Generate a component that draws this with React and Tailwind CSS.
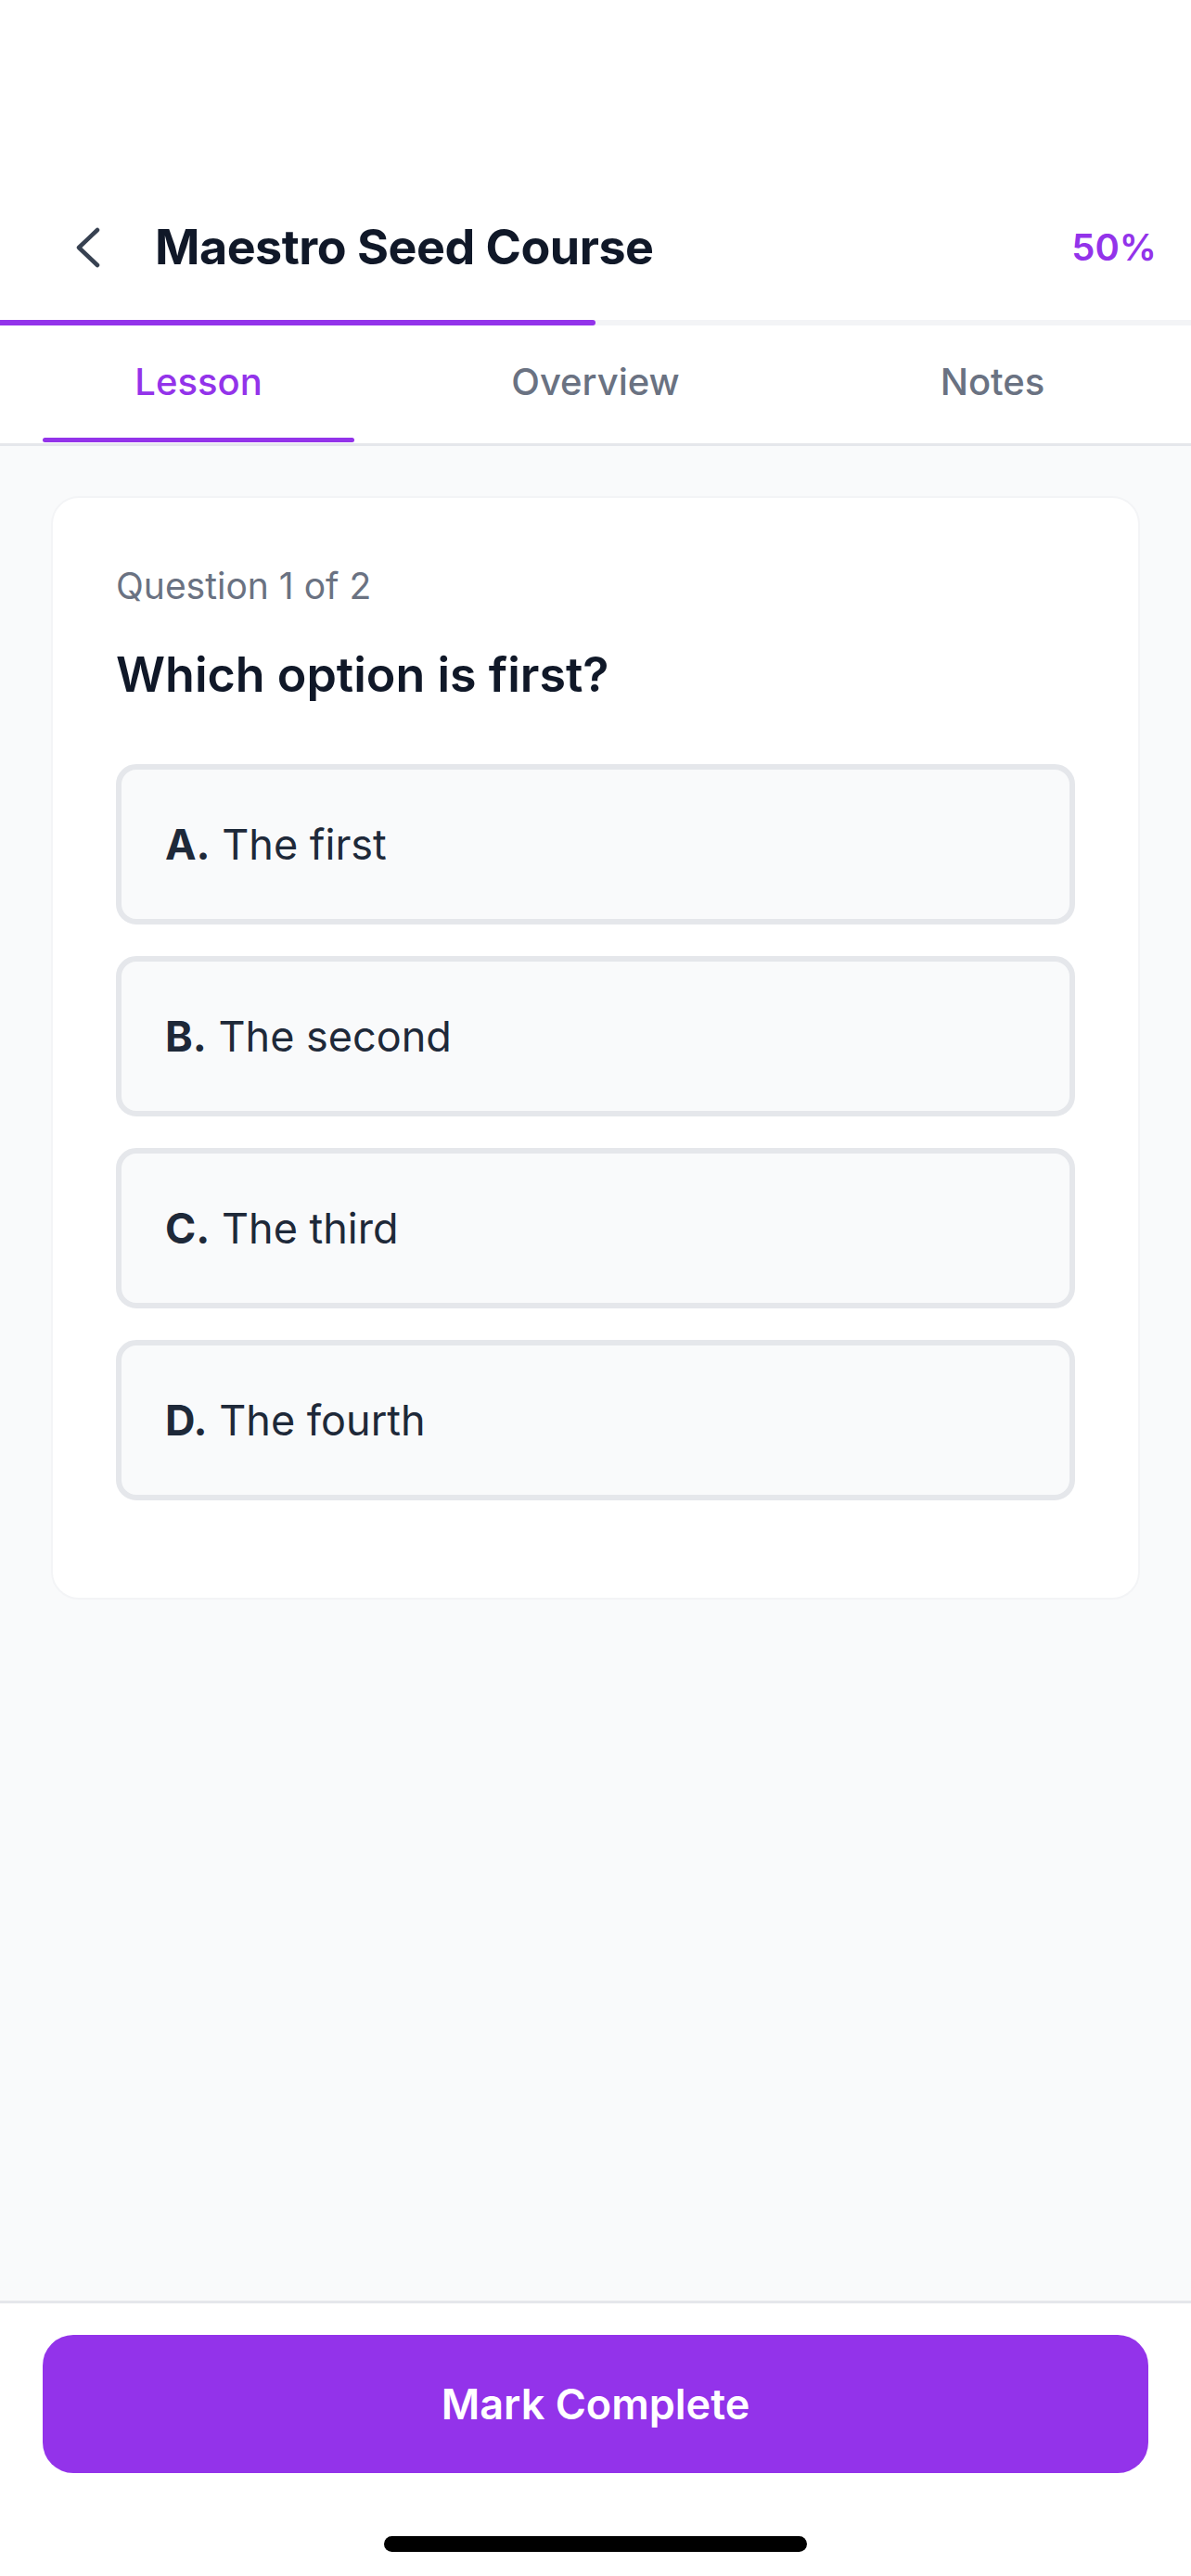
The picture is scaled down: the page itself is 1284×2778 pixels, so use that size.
import React, { useState } from "react";

const options = [
  { key: "A", text: "The first" },
  { key: "B", text: "The second" },
  { key: "C", text: "The third" },
  { key: "D", text: "The fourth" },
];

const tabs = ["Lesson", "Overview", "Notes"];

const App = () => {
  const [activeTab, setActiveTab] = useState("Lesson");
  const [selected, setSelected] = useState(null);
  const progress = 50;

  return (
    <div className="min-h-screen flex flex-col bg-white font-['Inter','Liberation_Sans',sans-serif]">
      {/* Header */}
      <div className="pt-[207px] pb-[18px]">
        <div className="h-[120px] flex items-center pl-[80px] pr-[37px]">
          <button type="button" className="w-[28px] h-[48px] flex items-center justify-center">
            <svg width="28" height="48" viewBox="0 0 28 48" fill="none">
              <polyline
                points="25,5 5,24 25,43"
                stroke="#374151"
                strokeWidth="4.5"
                strokeLinecap="round"
                strokeLinejoin="round"
              />
            </svg>
          </button>
          <h1 className="ml-[59px] flex-1 text-[52px] font-bold text-gray-900 tracking-[-0.5px]">
            Maestro Seed Course
          </h1>
          <span className="text-[40px] font-semibold text-[#9333ea]">{progress}%</span>
        </div>
      </div>

      {/* Progress */}
      <div className="h-[6px] bg-gray-100">
        <div className="h-full bg-[#9333ea] rounded-r-full" style={{ width: `${progress}%` }} />
      </div>

      {/* Tabs */}
      <div className="flex border-b-[3px] border-gray-200">
        {tabs.map((tab) => (
          <button
            key={tab}
            type="button"
            onClick={() => setActiveTab(tab)}
            className="flex-1 h-[127px] flex flex-col"
          >
            <span
              className={`flex-1 flex items-center justify-center text-[40px] font-medium ${
                activeTab === tab ? "text-[#9333ea]" : "text-gray-500"
              }`}
            >
              {tab}
            </span>
            <span
              className={`h-[5px] mx-[46px] mb-[1px] rounded-full ${
                activeTab === tab ? "bg-[#9333ea]" : "bg-transparent"
              }`}
            />
          </button>
        ))}
      </div>

      {/* Content */}
      <div className="flex-1 bg-gray-50 pt-[54px] px-[55px]">
        <div className="bg-white border-2 border-gray-100 rounded-[30px] pt-[71px] pb-[105px] px-[68px]">
          <p className="text-[39px] text-gray-500 leading-[48px]">Question 1 of 2</p>
          <h2 className="mt-[41px] text-[52px] font-semibold text-gray-900 leading-[62px]">
            Which option is first?
          </h2>
          <div className="mt-[65px] flex flex-col gap-[34px]">
            {options.map((opt) => (
              <button
                key={opt.key}
                type="button"
                onClick={() => setSelected(opt.key)}
                className={`h-[173px] flex items-center text-left pl-[47px] border-[6px] rounded-[22px] ${
                  selected === opt.key ? "border-[#9333ea] bg-purple-50" : "border-gray-200 bg-gray-50"
                }`}
              >
                <span className="text-[45px] text-gray-800">
                  <span className="font-bold">{opt.key}.</span> {opt.text}
                </span>
              </button>
            ))}
          </div>
        </div>
      </div>

      {/* Footer */}
      <div className="border-t-[3px] border-gray-200 bg-white pt-[34px] px-[46px]">
        <button
          type="button"
          className="w-full h-[149px] rounded-[33px] bg-[#9333ea] text-white text-[45px] font-semibold"
        >
          Mark Complete
        </button>
        <div className="pt-[68px] pb-[26px] flex justify-center">
          <div className="w-[456px] h-[17px] rounded-full bg-black" />
        </div>
      </div>
    </div>
  );
};

export default App;
